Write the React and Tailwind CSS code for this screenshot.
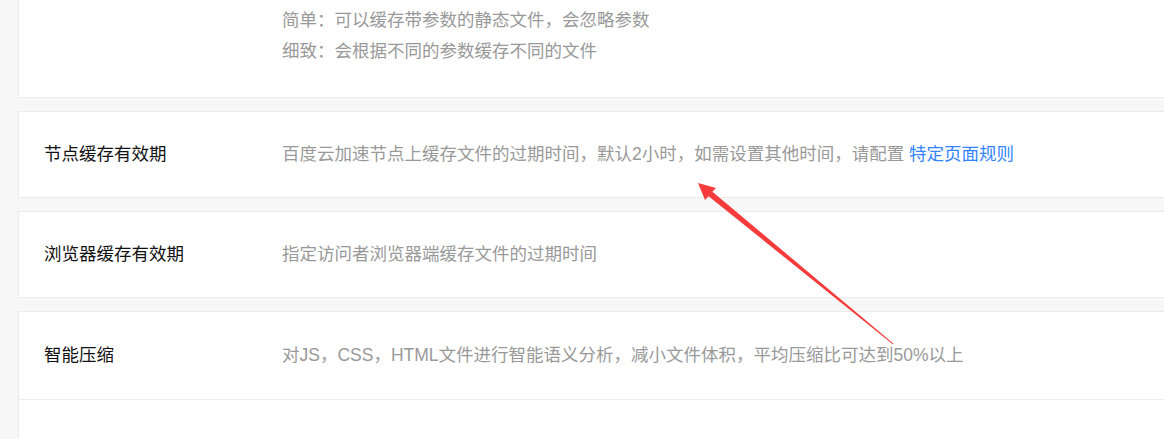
const FONT = { fontFamily: '"Liberation Sans", "Noto Sans CJK SC", sans-serif' };

const rows = [
  {
    label: '节点缓存有效期',
    desc: (
      <>
        百度云加速节点上缓存文件的过期时间，默认2小时，如需设置其他时间，请配置{' '}
        <a className="text-[#3385ff]">特定页面规则</a>
      </>
    ),
  },
  { label: '浏览器缓存有效期', desc: '指定访问者浏览器端缓存文件的过期时间' },
];

function Row({ label, desc, className = '' }) {
  return (
    <div className={`flex items-center ${className}`}>
      <div className="w-[263px] shrink-0 pl-[25px] text-[#111]">{label}</div>
      <div className="text-[#999]">{desc}</div>
    </div>
  );
}

function Arrow() {
  return (
    <svg className="pointer-events-none absolute left-0 top-0" width="1164" height="439">
      <polygon
        fill="#f53b3b"
        points="698,183 716,188 712.4,191.7 893.4,343.5 892.8,344.3 708.6,196.3 705,200"
      />
    </svg>
  );
}

export default function App() {
  return (
    <div className="relative h-[439px] overflow-hidden bg-[#f7f7f7] text-[17.5px]" style={FONT}>
      <div className="flex w-[1200px] flex-col gap-[13px] pl-[18px]">
        <div className="border border-t-0 border-[#ebebeb] bg-white pb-[30px] pt-[5px] leading-[31px]">
          <div className="pl-[263px] text-[#999]">
            <div>简单：可以缓存带参数的静态文件，会忽略参数</div>
            <div>细致：会根据不同的参数缓存不同的文件</div>
          </div>
        </div>
        {rows.map((r) => (
          <Row
            key={r.label}
            label={r.label}
            desc={r.desc}
            className="h-[87px] border border-[#ebebeb] bg-white"
          />
        ))}
        <div className="border border-[#ebebeb] bg-white">
          <Row
            label="智能压缩"
            desc="对JS，CSS，HTML文件进行智能语义分析，减小文件体积，平均压缩比可达到50%以上"
            className="h-[88px] border-b border-[#ebebeb]"
          />
          <div className="h-[60px]" />
        </div>
      </div>
      <Arrow />
    </div>
  );
}
